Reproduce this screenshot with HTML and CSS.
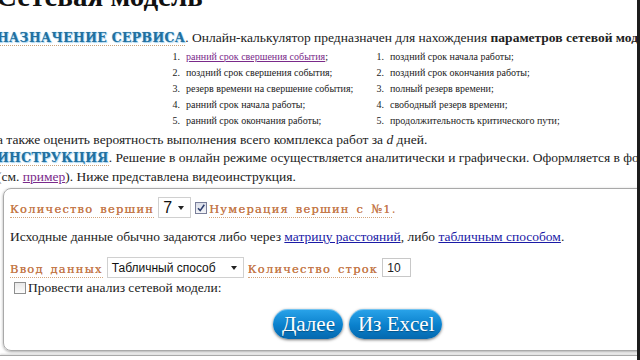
FILE: index.html
```html
<!DOCTYPE html>
<html lang="ru">
<head>
<meta charset="utf-8">
<title>Сетевая модель</title>
<link rel="stylesheet" href="styles.css">
</head>
<body>
<div class="screen">
  <main class="page">
    <h1 class="title">Сетевая модель</h1>
    <p class="line"><span class="hd">НАЗНАЧЕНИЕ СЕРВИСА</span>. Онлайн-калькулятор предназначен для нахождения <b>параметров сетевой модели</b>:</p>
    <div class="lists">
      <ol class="col col1">
        <li><span class="n">1.</span><a href="#" class="visited">ранний срок свершения события</a>;</li>
        <li><span class="n">2.</span>поздний срок свершения события;</li>
        <li><span class="n">3.</span>резерв времени на свершение события;</li>
        <li><span class="n">4.</span>ранний срок начала работы;</li>
        <li><span class="n">5.</span>ранний срок окончания работы;</li>
      </ol>
      <ol class="col col2">
        <li><span class="n">1.</span>поздний срок начала работы;</li>
        <li><span class="n">2.</span>поздний срок окончания работы;</li>
        <li><span class="n">3.</span>полный резерв времени;</li>
        <li><span class="n">4.</span>свободный резерв времени;</li>
        <li><span class="n">5.</span>продолжительность критического пути;</li>
      </ol>
    </div>
    <p class="line">а также оценить вероятность выполнения всего комплекса работ за <i>d</i> дней.</p>
    <p class="line"><span class="hd">ИНСТРУКЦИЯ</span>. Решение в онлайн режиме осуществляется аналитически и графически. Оформляется в формате Word.</p>
    <p class="line">(см. <a href="#" class="visited">пример</a>). Ниже представлена видеоинструкция.</p>

    <div class="box">
      <div class="row">
        <span class="lbl">Количество вершин</span>
        <span class="sel sel-small"><span class="sel-val">7</span><span class="caret"></span></span>
        <span class="cb checked"><svg viewBox="0 0 10 10" width="10" height="10"><path d="M2 5.2 L4.2 7.6 L8.3 1.8" fill="none" stroke="#2f3f6f" stroke-width="1.6"/></svg></span>
        <span class="lbl">Нумерация вершин с №1</span><span class="dot">.</span>
      </div>
      <p class="info">Исходные данные обычно задаются либо через <a href="#">матрицу расстояний</a>, либо <a href="#">табличным способом</a>.</p>
      <div class="row">
        <span class="lbl">Ввод данных</span>
        <span class="sel sel-wide"><span class="sel-val">Табличный способ</span><span class="caret"></span></span>
        <span class="lbl">Количество строк</span>
        <span class="inp">10</span>
      </div>
      <div class="row2">
        <span class="cb"></span>
        <span class="cb-text">Провести анализ сетевой модели:</span>
      </div>
      <div class="buttons">
        <span class="btn">Далее</span>
        <span class="btn">Из Excel</span>
      </div>
    </div>
    <div class="next-box"></div>
  </main>
  <div class="edge"></div>
</div>
</body>
</html>
```

FILE: styles.css
```css
html, body {
  margin: 0;
  padding: 0;
  background: #ffffff;
}
body {
  width: 640px;
  height: 360px;
  overflow: hidden;
  font-family: "Liberation Serif", "Times New Roman", serif;
  color: #222;
}
.screen {
  display: flex;
  width: 640px;
  height: 360px;
}
.page {
  width: 637px;
  height: 360px;
  overflow: hidden;
  flex: none;
}
.edge {
  width: 3px;
  height: 360px;
  background: #1c1c1c;
  flex: none;
}
.title {
  margin: -21px 0 0 -4px;
  font-size: 29px;
  line-height: 34px;
  font-weight: bold;
  color: #111;
  white-space: nowrap;
}
.line {
  margin: 0 0 0 -3px;
  font-size: 13.5px;
  line-height: 18.5px;
  white-space: nowrap;
}
.line:first-of-type {
  margin-top: 16px;
}
.hd {
  font-family: "DejaVu Serif", serif;
  font-weight: bold;
  font-size: 12.5px;
  letter-spacing: 0.3px;
  color: #22709f;
  text-shadow: 0 0 1px #8ccaee, 1px 1px 1px #a8d4ef;
  border-bottom: 1px dotted #c9a27a;
}
a {
  color: #1a1aa6;
}
a.visited {
  color: #7a2a8a;
}
.lists {
  display: flex;
  margin: 1px 0 2px 166px;
}
.col {
  list-style: none;
  margin: 0;
  padding: 0;
  font-size: 10px;
  line-height: 16px;
  white-space: nowrap;
}
.col1 {
  width: 204px;
}
.col li {
  display: flex;
}
.n {
  width: 20px;
  padding-right: 6px;
  text-align: right;
  box-sizing: border-box;
  flex: none;
}
.box {
  margin: 2px 0 0 3px;
  width: 660px;
  border: 1px solid #a9a9a9;
  border-radius: 8px;
  box-shadow: 0 1px 3px rgba(0,0,0,0.35);
  padding: 8px 0 9px 6px;
  box-sizing: border-box;
  height: 163px;
}
.row {
  display: flex;
  align-items: center;
  height: 21px;
  white-space: nowrap;
}
.lbl {
  font-family: "DejaVu Serif", serif;
  font-size: 11.5px;
  color: #c4784a;
  letter-spacing: 1.2px;
  word-spacing: 2px;
  border-bottom: 1px dotted #d4a57e;
  line-height: 16px;
  margin-top: 3px;
  text-shadow: 0 0 0.5px #c4784a;
}
.dot {
  font-family: "DejaVu Serif", serif;
  font-size: 12px;
  color: #c4784a;
  margin-top: 3px;
}
.sel {
  display: inline-flex;
  align-items: center;
  justify-content: space-between;
  height: 21px;
  box-sizing: border-box;
  border: 1px solid #d0d0d0;
  background: #fff;
  font-family: "Liberation Sans", Arial, sans-serif;
  color: #111;
  margin: 0 4px 0 4px;
  padding: 0 6px 0 4px;
}
.sel-small {
  width: 33px;
  font-size: 16px;
}
.sel-wide {
  width: 137px;
  font-size: 12px;
}
.caret {
  width: 0;
  height: 0;
  border-left: 3.5px solid transparent;
  border-right: 3.5px solid transparent;
  border-top: 4px solid #222;
}
.cb {
  display: inline-block;
  width: 12px;
  height: 12px;
  box-sizing: border-box;
  border: 1px solid #8e8f8f;
  background: linear-gradient(#e8e8e8, #fcfcfc);
  margin-right: 2px;
}
.cb.checked {
  border-color: #7a7f9a;
  background: linear-gradient(#d9dde8, #f4f5f8);
}
.cb svg {
  display: block;
}
.info {
  margin: 10px 0 0 0;
  font-size: 13.5px;
  line-height: 18px;
  white-space: nowrap;
}
.row:nth-of-type(2) {
  margin-top: 11px;
}
.inp {
  display: inline-flex;
  align-items: center;
  width: 29px;
  height: 19px;
  box-sizing: border-box;
  border: 1px solid #c8c8c8;
  margin-left: 4px;
  padding-left: 4px;
  font-family: "Liberation Sans", Arial, sans-serif;
  font-size: 12px;
}
.row2 {
  display: flex;
  align-items: center;
  margin: 1px 0 0 4px;
  height: 18px;
}
.cb-text {
  font-size: 13.5px;
  line-height: 18px;
}
.buttons {
  display: flex;
  gap: 6px;
  margin: 12px 0 0 263px;
}
.btn {
  display: inline-flex;
  align-items: center;
  height: 30px;
  padding: 0 8px 0 9px;
  border-radius: 15px;
  background: linear-gradient(#2aa4ea, #0a80cc 55%, #0568ae);
  color: #ffffff;
  font-size: 21px;
  font-family: "Liberation Serif", serif;
  box-shadow: 0 1px 3px rgba(0,0,0,0.55), inset 0 1px 0 rgba(255,255,255,0.35);
  text-shadow: 0 1px 1px rgba(0,0,0,0.3);
}
.next-box {
  margin-top: 4px;
  height: 10px;
  border-top: 1px solid #a9a9a9;
  box-shadow: 0 -1px 2px rgba(0,0,0,0.15);
}
```
